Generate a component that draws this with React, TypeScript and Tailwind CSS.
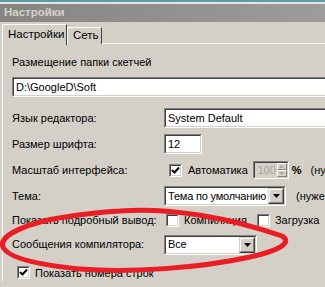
import React from 'react';

const font = { fontFamily: '"Liberation Sans", Arial, sans-serif' };

const Sunken: React.FC<{ className?: string; children?: React.ReactNode }> = ({ className = '', children }) => (
  <div className={`border border-t-[#808080] border-l-[#808080] border-b-white border-r-white ${className}`}>
    <div className="h-full w-full border border-t-[#404040] border-l-[#404040] border-b-[#d4d0c8] border-r-[#d4d0c8] flex items-center">
      {children}
    </div>
  </div>
);

const Check: React.FC<{ checked?: boolean }> = ({ checked }) => (
  <Sunken className="w-[13px] h-[13px] bg-white shrink-0">
    {checked && (
      <svg width="9" height="9" viewBox="0 0 9 9" className="block">
        <path d="M1 4 L3.5 6.5 L8 1.5" stroke="#000" strokeWidth="2" fill="none" />
      </svg>
    )}
  </Sunken>
);

const ArrowBtn: React.FC = () => (
  <div className="w-[16px] h-full bg-[#d4d0c8] border border-t-[#d4d0c8] border-l-[#d4d0c8] border-b-[#404040] border-r-[#404040] shrink-0">
    <div className="h-full w-full border border-t-white border-l-white border-b-[#808080] border-r-[#808080] flex items-center justify-center">
      <svg width="7" height="4" viewBox="0 0 7 4"><path d="M0 0 H7 L3.5 4 Z" fill="#000" /></svg>
    </div>
  </div>
);

const Combo: React.FC<{ value: string; className?: string }> = ({ value, className = '' }) => (
  <Sunken className={`h-[20px] bg-white ${className}`}>
    <span className="flex-1 pl-[2px] whitespace-nowrap overflow-hidden tracking-[-0.2px]">{value}</span>
    <ArrowBtn />
  </Sunken>
);

export default function App() {
  return (
    <div className="relative w-[325px] h-[287px] overflow-hidden bg-[#d4d0c8] text-[11px] text-black" style={font}>
      {/* window top */}
      <div className="h-[2px] bg-[#5f9ea0]" />
      <div className="h-[2px] bg-[#e4e4e4]" />
      <div className="h-[18px] bg-gradient-to-r from-[#878583] to-[#9e9c9a] flex items-center pl-[4px]">
        <span className="font-bold text-[11.5px] text-[#d6d2ca]">Настройки</span>
      </div>

      {/* tabs */}
      <div className="flex items-end pl-[2px] pt-[1px] h-[22px]">
        <div className="h-[21px] w-[65px] pl-[5px] flex items-center border-t border-l border-white border-r border-r-[#404040] bg-[#d4d0c8] relative z-10 -mb-px text-[11.5px]">
          Настройки
        </div>
        <div className="h-[17px] w-[35px] pl-[5px] flex items-center border-t border-l border-white border-r border-r-[#404040] text-[11.5px]">
          Сеть
        </div>
        <div className="flex-1 border-b border-white" />
      </div>

      {/* panel */}
      <div className="ml-[2px] border-l border-white pl-[9px] pt-[11px]">
        <div className="h-[14px] flex items-center">Размещение папки скетчей</div>
        <Sunken className="mt-[8px] h-[20px] bg-white w-[330px]">
          <span className="pl-[2px]">D:\GoogleD\Soft</span>
        </Sunken>

        <div className="mt-[11px] grid grid-cols-[152px_1fr] gap-y-[6px] items-center">
          <div>Язык редактора:</div>
          <Sunken className="h-[20px] bg-white w-[200px]">
            <span className="pl-[2px]">System Default</span>
          </Sunken>

          <div>Размер шрифта:</div>
          <Sunken className="h-[20px] bg-white w-[38px]">
            <span className="pl-[2px]">12</span>
          </Sunken>

          <div>Масштаб интерфейса:</div>
          <div className="h-[20px] flex items-center whitespace-nowrap">
            <span className="ml-[5px]"><Check checked /></span>
            <span className="ml-[6px]">Автоматика</span>
            <Sunken className="ml-[5px] h-[18px] w-[36px]">
              <span className="flex-1 text-right pr-[1px] text-[#a8a49c]">100</span>
              <div className="w-[10px] h-full flex flex-col">
                <div className="flex-1 border border-t-white border-l-white border-b-[#808080] border-r-[#808080] flex items-center justify-center">
                  <svg width="5" height="3" viewBox="0 0 5 3"><path d="M0 3 H5 L2.5 0 Z" fill="#a8a49c" /></svg>
                </div>
                <div className="flex-1 border border-t-white border-l-white border-b-[#808080] border-r-[#808080] flex items-center justify-center">
                  <svg width="5" height="3" viewBox="0 0 5 3"><path d="M0 0 H5 L2.5 3 Z" fill="#a8a49c" /></svg>
                </div>
              </div>
            </Sunken>
            <span className="ml-[3px] font-bold">%</span>
            <span className="ml-[9px]">(нужен перезапуск)</span>
          </div>

          <div>Тема:</div>
          <div className="h-[20px] flex items-center whitespace-nowrap">
            <Combo value="Тема по умолчанию" className="w-[122px]" />
            <span className="ml-[10px]">(нужен перезапуск)</span>
          </div>

          <div className="whitespace-nowrap">Показать подробный вывод:</div>
          <div className="h-[14px] flex items-center whitespace-nowrap">
            <span className="ml-[2px]"><Check /></span>
            <span className="ml-[5px]">Компиляция</span>
            <span className="ml-[10px]"><Check /></span>
            <span className="ml-[5px]">Загрузка</span>
          </div>

          <div>Сообщения компилятора:</div>
          <Combo value="Все" className="w-[93px]" />
        </div>

        <div className="mt-[10px] flex items-center pl-[5px]">
          <Check checked />
          <span className="ml-[5px]">Показать номера строк</span>
        </div>
      </div>

      {/* red hand-drawn ellipse */}
      <svg className="absolute inset-0 pointer-events-none" width="325" height="287" viewBox="0 0 325 287">
        <path
          d="M120 211 C170 207 230 218 282 236 C292 242 282 250 250 257 C200 268 130 273 80 269 C40 265 8 258 3 247 C-2 235 30 222 65 217 C85 214 100 212 120 211 Z"
          fill="none"
          stroke="#ea1c24"
          strokeWidth="5"
          strokeLinejoin="round"
        />
      </svg>
    </div>
  );
}
